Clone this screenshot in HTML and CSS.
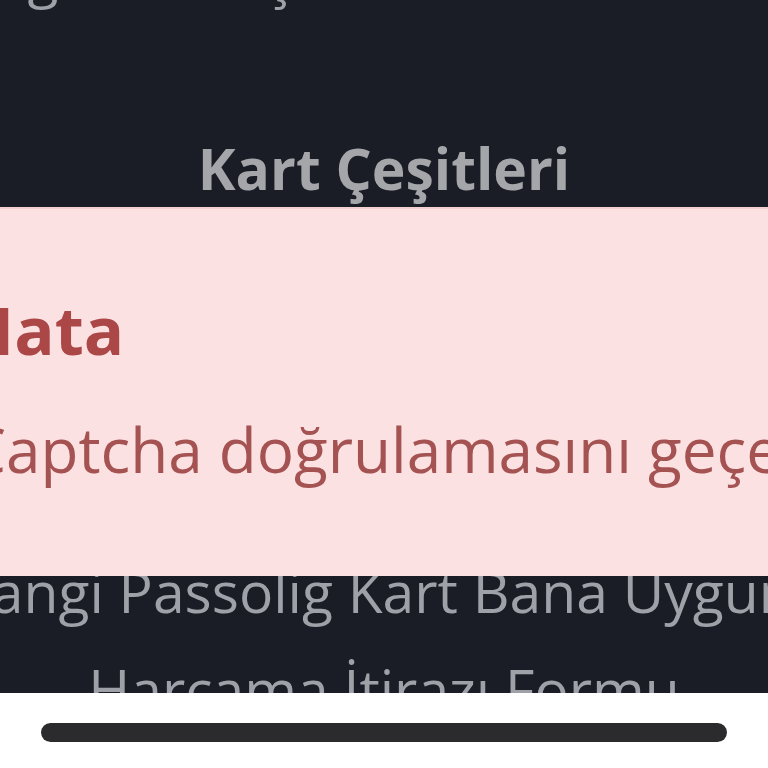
FILE: index.html
```html
<!DOCTYPE html>
<html lang="tr">
<head>
<meta charset="utf-8">
<title>Kart Çeşitleri</title>
<link rel="stylesheet" href="styles.css">
</head>
<body>
<div class="screen">
  <main class="content">
    <a class="link link-top" href="#">Passolig Kart Başvurusu Hakkında Notlar</a>
    <h2 class="section-title">Kart Çeşitleri</h2>
    <nav class="links">
      <a class="link" href="#">Hangi Passolig Kart Bana Uygun?</a>
      <a class="link" href="#">Harcama İtirazı Formu</a>
    </nav>
  </main>
  <div class="home-area">
    <div class="home-indicator"></div>
  </div>
</div>
<div class="alert" role="alert">
  <div class="alert-title">Hata</div>
  <div class="alert-text">Captcha doğrulamasını geçemediniz.</div>
</div>
</body>
</html>
```
FILE: styles.css
```css
html, body {
  margin: 0;
  padding: 0;
  width: 768px;
  height: 768px;
  overflow: hidden;
  background: #ffffff;
  font-family: "Open Sans", "Liberation Sans", sans-serif;
}

.screen {
  display: flex;
  flex-direction: column;
  width: 768px;
  height: 768px;
}

.content {
  height: 693px;
  flex: none;
  background: #1b1d26;
  overflow: hidden;
  display: flex;
  flex-direction: column;
  align-items: center;
}

.link {
  display: block;
  white-space: nowrap;
  text-decoration: none;
  color: #9ea1a7;
  font-size: 57px;
  line-height: 98px;
  text-align: center;
}

.link-top {
  margin-top: -75px;
}

.section-title {
  margin: 105px 0 0;
  font-size: 57px;
  font-weight: 700;
  line-height: 80px;
  color: #a4a6aa;
  white-space: nowrap;
}

.links {
  margin-top: 334px;
  display: flex;
  flex-direction: column;
  align-items: center;
}

.home-area {
  flex: 1;
  background: #ffffff;
  display: flex;
  justify-content: center;
  padding-top: 30px;
}

.home-indicator {
  width: 686px;
  height: 19px;
  border-radius: 10px;
  background: #2b2b2d;
}

.alert {
  position: fixed;
  top: 207px;
  left: -60px;
  right: -60px;
  height: 369px;
  box-sizing: border-box;
  padding: 74px 0 0 23px;
  background: #fbe1e1;
  border-top: 2px solid #f3cfd0;
  overflow: hidden;
  white-space: nowrap;
}

.alert-title {
  font-size: 67px;
  font-weight: 700;
  line-height: 92px;
  color: #ab4747;
}

.alert-text {
  margin-top: 32px;
  padding-left: 4px;
  font-size: 62px;
  line-height: 84px;
  color: #a55252;
}
```
